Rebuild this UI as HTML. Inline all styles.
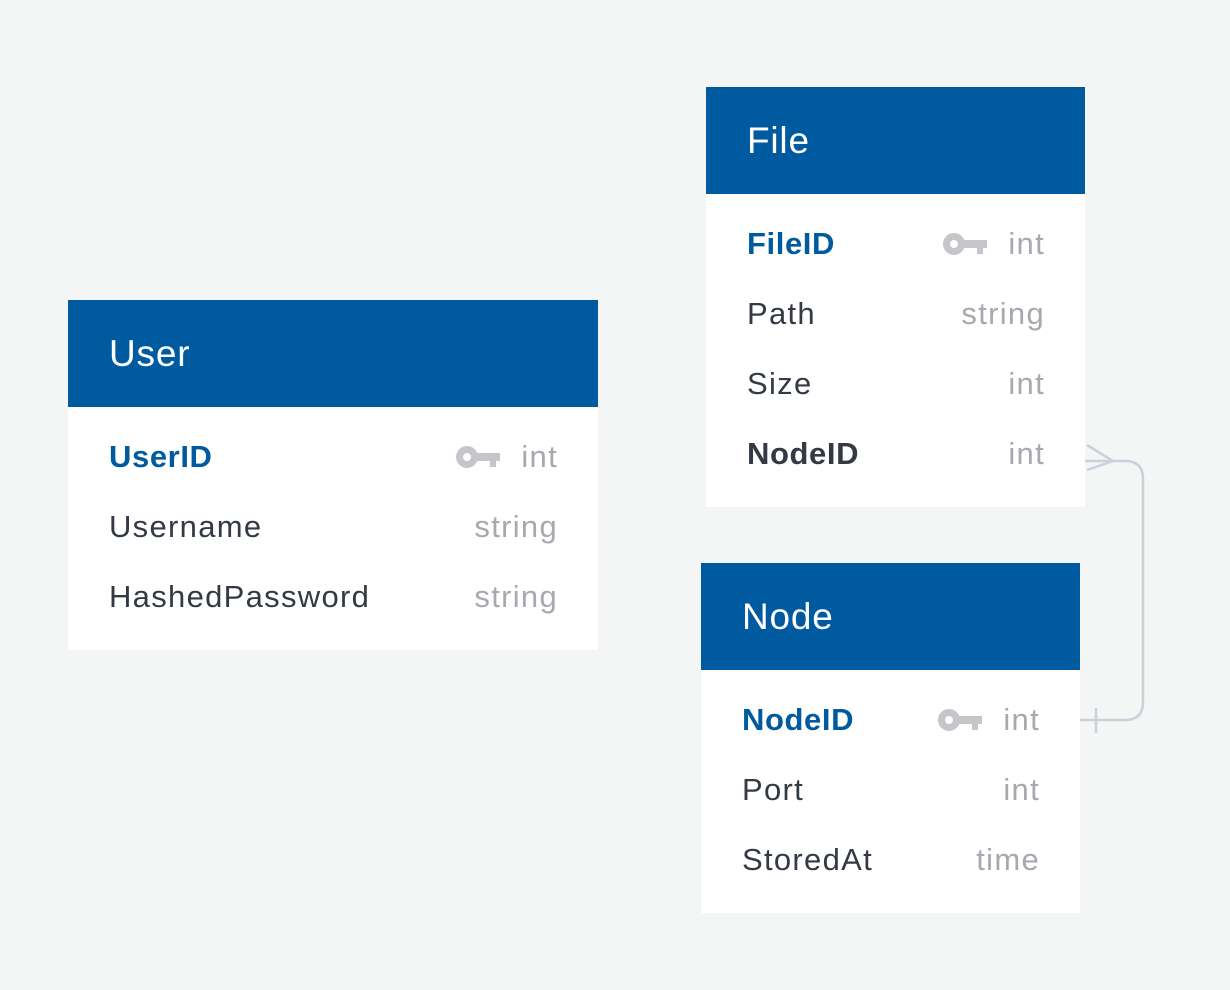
<!DOCTYPE html>
<html><head><meta charset="utf-8"><style>
body{margin:0;width:1230px;height:990px;background:#f4f5f5;position:relative;overflow:hidden;font-family:"Liberation Sans",Arial,sans-serif}
.t{position:absolute;background:#fff}
.h{position:absolute;left:0;right:0;top:0;height:107px;background:#005a9f;color:#fff;font-size:37px;letter-spacing:0.8px;line-height:107px;padding-left:41px;box-sizing:border-box}
.r{position:absolute;left:41px;right:41px;height:40px;line-height:40px;font-size:31px;letter-spacing:1.3px;color:#343a43}
.r .n{position:absolute;left:0}
.r .ty{position:absolute;right:-1px;color:#a6a9ae}
.pk .n{color:#005a9f;font-weight:bold;letter-spacing:0.6px}
.fk .n{font-weight:bold;letter-spacing:0.6px}
.key{position:absolute;right:57px;top:9px}
</style></head><body>
<svg style="position:absolute;left:0;top:0" width="1230" height="990">
<g fill="none" stroke="#cdd0da" stroke-width="2.5">
<path d="M1085 461 H1125 Q1143 461 1143 479 V702 Q1143 720 1125 720 H1080"/>
<path d="M1087 445 L1113 461 L1087 470"/>
<path d="M1096 708 V733"/>
</g></svg>

<div class="t" style="left:68px;top:300px;width:530px;height:350px">
<div class="h">User</div>
<div class="r pk" style="top:137px"><span class="n">UserID</span><svg class="key" width="44" height="24" viewBox="0 0 44 24"><circle cx="11" cy="11" r="7.5" fill="none" stroke="#c4c6c9" stroke-width="7"/><path d="M17 7 H44 V15 H40 V21 H34 V15 H17Z" fill="#c4c6c9"/></svg><span class="ty">int</span></div>
<div class="r" style="top:207px"><span class="n">Username</span><span class="ty">string</span></div>
<div class="r" style="top:277px"><span class="n">HashedPassword</span><span class="ty">string</span></div>
</div>

<div class="t" style="left:706px;top:87px;width:379px;height:420px">
<div class="h">File</div>
<div class="r pk" style="top:137px"><span class="n">FileID</span><svg class="key" width="44" height="24" viewBox="0 0 44 24"><circle cx="11" cy="11" r="7.5" fill="none" stroke="#c4c6c9" stroke-width="7"/><path d="M17 7 H44 V15 H40 V21 H34 V15 H17Z" fill="#c4c6c9"/></svg><span class="ty">int</span></div>
<div class="r" style="top:207px"><span class="n">Path</span><span class="ty">string</span></div>
<div class="r" style="top:277px"><span class="n">Size</span><span class="ty">int</span></div>
<div class="r fk" style="top:347px"><span class="n">NodeID</span><span class="ty">int</span></div>
</div>

<div class="t" style="left:701px;top:563px;width:379px;height:350px">
<div class="h">Node</div>
<div class="r pk" style="top:137px"><span class="n">NodeID</span><svg class="key" width="44" height="24" viewBox="0 0 44 24"><circle cx="11" cy="11" r="7.5" fill="none" stroke="#c4c6c9" stroke-width="7"/><path d="M17 7 H44 V15 H40 V21 H34 V15 H17Z" fill="#c4c6c9"/></svg><span class="ty">int</span></div>
<div class="r" style="top:207px"><span class="n">Port</span><span class="ty">int</span></div>
<div class="r" style="top:277px"><span class="n">StoredAt</span><span class="ty">time</span></div>
</div>
</body></html>
